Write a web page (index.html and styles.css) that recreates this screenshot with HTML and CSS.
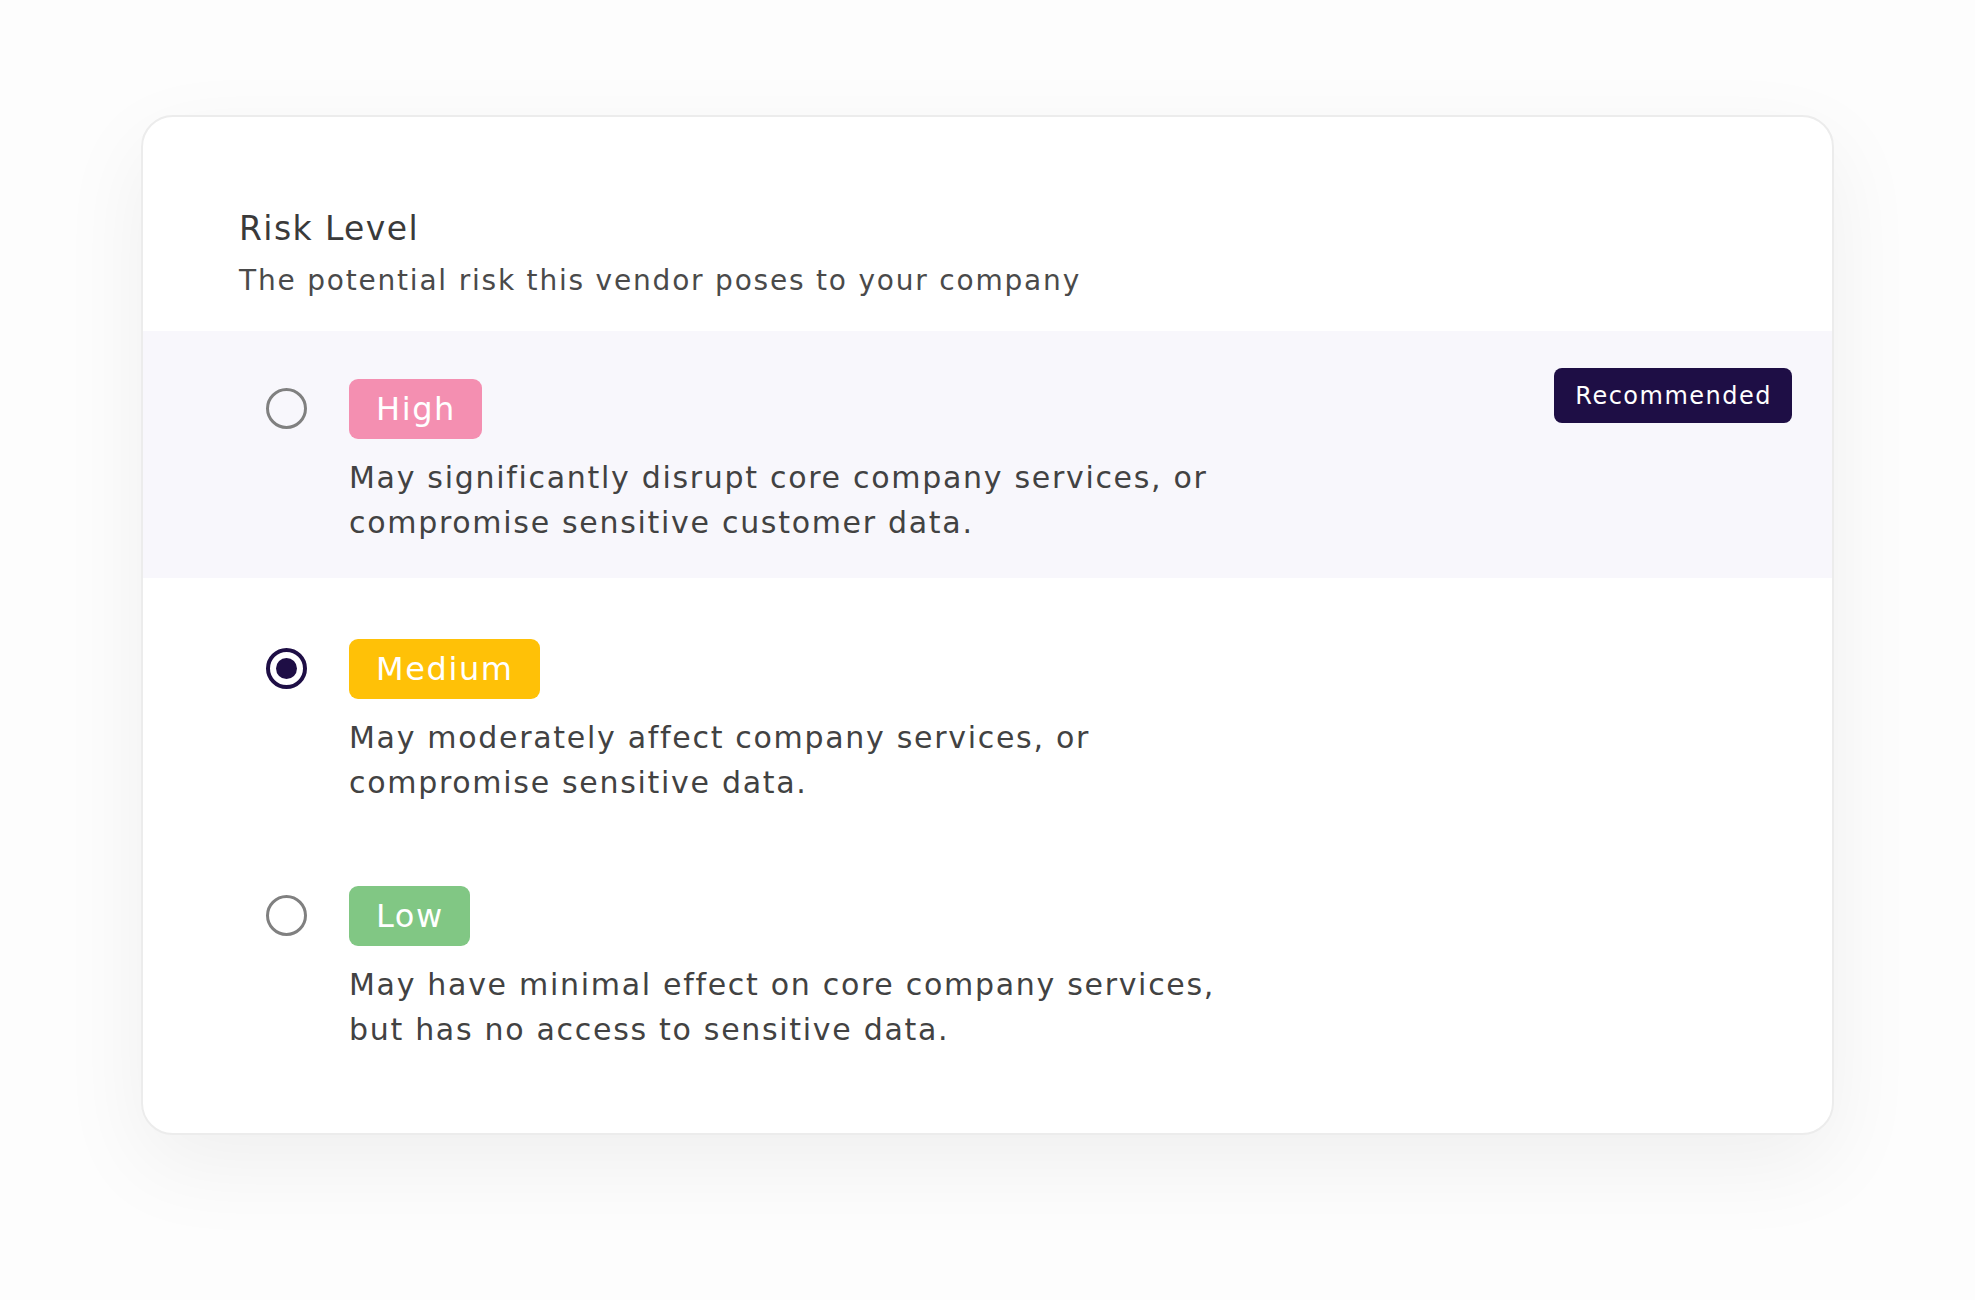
FILE: index.html
```html
<!DOCTYPE html>
<html lang="en">
<head>
<meta charset="utf-8">
<title>Risk Level</title>
<link rel="stylesheet" href="styles.css">
</head>
<body>
<main class="page">
  <section class="card">
    <header class="card-header">
      <h1 class="title">Risk Level</h1>
      <p class="subtitle">The potential risk this vendor poses to your company</p>
    </header>
    <div class="options">
      <div class="option option--highlight">
        <span class="radio"></span>
        <div class="option-body">
          <span class="tag tag--high">High</span>
          <p class="desc">May significantly disrupt core company services, or<br>compromise sensitive customer data.</p>
        </div>
        <span class="recommended">Recommended</span>
      </div>
      <div class="option">
        <span class="radio radio--checked"><span class="radio-dot"></span></span>
        <div class="option-body">
          <span class="tag tag--medium">Medium</span>
          <p class="desc">May moderately affect company services, or<br>compromise sensitive data.</p>
        </div>
      </div>
      <div class="option">
        <span class="radio"></span>
        <div class="option-body">
          <span class="tag tag--low">Low</span>
          <p class="desc">May have minimal effect on core company services,<br>but has no access to sensitive data.</p>
        </div>
      </div>
    </div>
  </section>
</main>
</body>
</html>
```
FILE: styles.css
```css
* { box-sizing: border-box; }

html, body {
  margin: 0;
  padding: 0;
  background: #ffffff;
}

body {
  font-family: "DejaVu Sans", "Noto Sans", sans-serif;
  color: #3f3f3f;
}

.page {
  padding: 115px 141px 0;
  min-height: 1300px;
  background: #fdfdfd;
}

.card {
  width: 1693px;
  background: #ffffff;
  border: 2px solid #ececec;
  border-radius: 32px;
  box-shadow: 0 30px 90px rgba(0, 0, 0, 0.06);
  padding-bottom: 48px;
  overflow: hidden;
}

.card-header {
  padding: 92px 96px 33px;
}

.title {
  margin: 0;
  font-size: 33px;
  line-height: 40px;
  font-weight: 400;
  letter-spacing: 1.4px;
  color: #3a3a3a;
}

.subtitle {
  margin: 15px 0 0;
  font-size: 28px;
  line-height: 34px;
  font-weight: 400;
  letter-spacing: 1.8px;
  color: #4a4a4a;
}

.options {
  display: flex;
  flex-direction: column;
}

.option {
  position: relative;
  display: flex;
  align-items: flex-start;
  gap: 42px;
  padding: 48px 40px 33px 123px;
}

.option--highlight {
  background: #f8f7fc;
  margin-bottom: 13px;
}

.radio {
  flex: none;
  width: 41px;
  height: 41px;
  margin-top: 9px;
  border: 3px solid #808080;
  border-radius: 50%;
  display: flex;
  align-items: center;
  justify-content: center;
}

.radio--checked {
  border: 4px solid #1e0e45;
}

.radio-dot {
  width: 21px;
  height: 21px;
  border-radius: 50%;
  background: #1e0e45;
}

.option-body {
  display: flex;
  flex-direction: column;
  align-items: flex-start;
}

.tag {
  display: inline-flex;
  align-items: center;
  height: 60px;
  padding: 0 26px 0 27px;
  border-radius: 9px;
  font-size: 32px;
  font-weight: 400;
  color: #ffffff;
  letter-spacing: 1.6px;
}

.tag--high { background: #f48fb1; }
.tag--medium { background: #ffc107; }
.tag--low { background: #81c784; }

.desc {
  margin: 16px 0 0;
  font-size: 30px;
  line-height: 45px;
  font-weight: 400;
  letter-spacing: 1.7px;
  color: #424242;
}

.recommended {
  position: absolute;
  top: 37px;
  right: 40px;
  display: inline-flex;
  align-items: center;
  height: 55px;
  padding: 0 20px 0 21px;
  border-radius: 8px;
  background: #1e0e45;
  color: #ffffff;
  font-size: 24px;
  font-weight: 400;
  letter-spacing: 1.5px;
}
```
